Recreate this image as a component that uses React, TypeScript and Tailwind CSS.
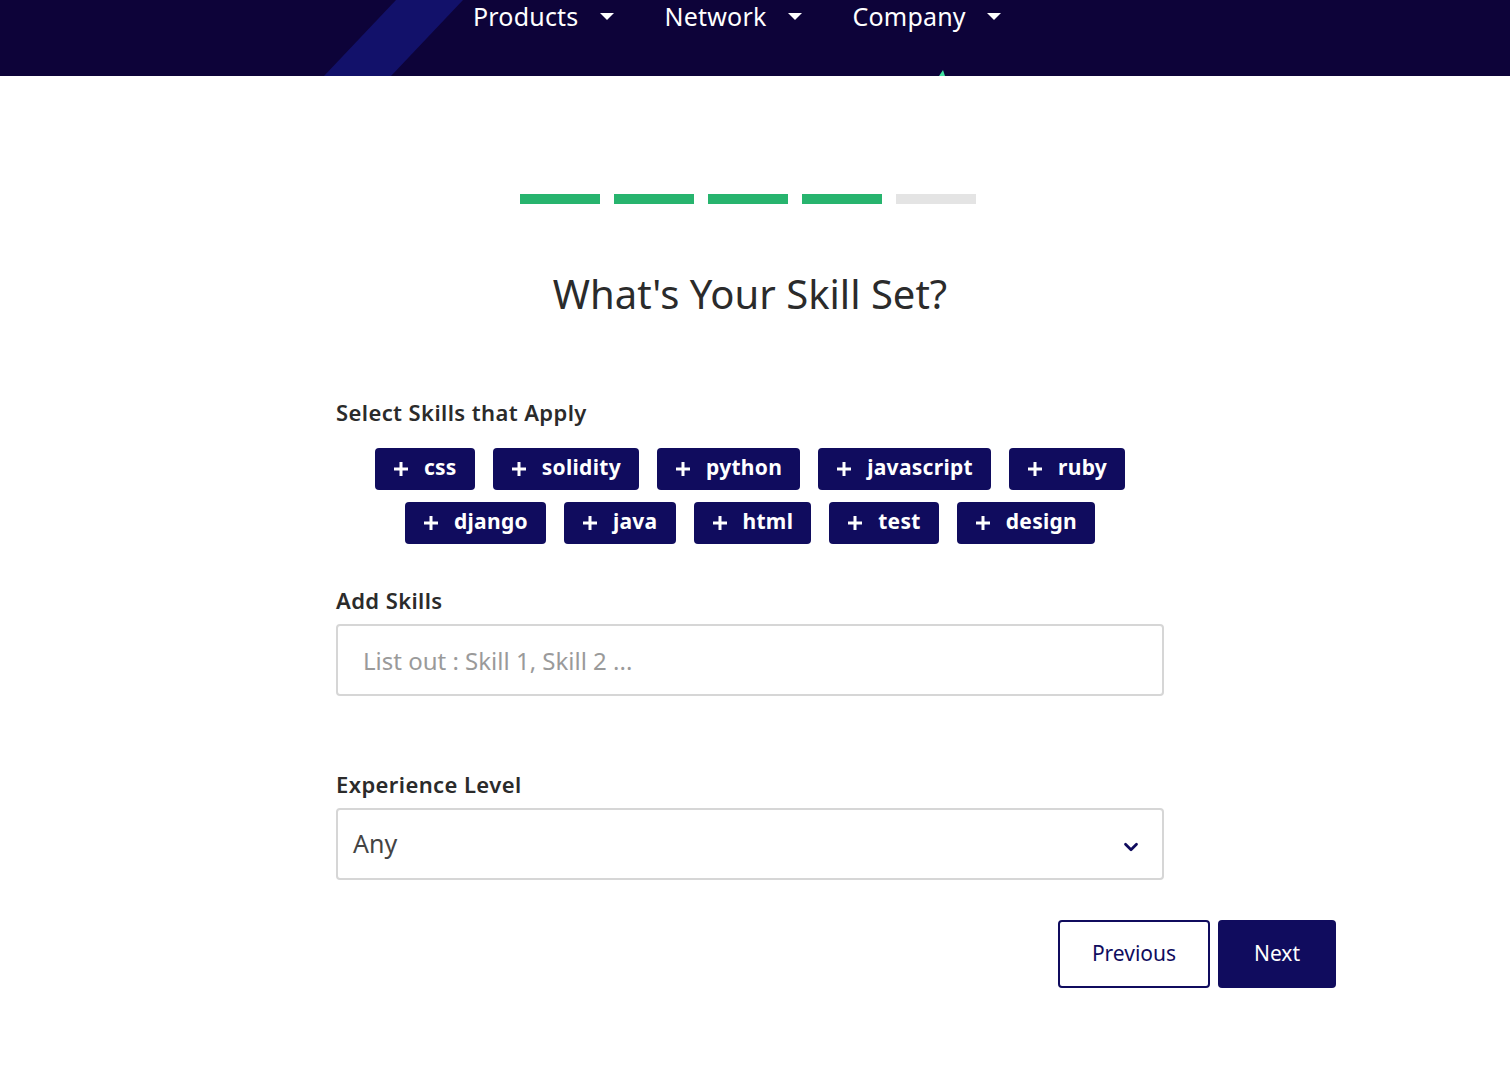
import { ChevronDown } from 'lucide-react';

const row1 = ['css', 'solidity', 'python', 'javascript', 'ruby'];
const row2 = ['django', 'java', 'html', 'test', 'design'];
const steps = [true, true, true, true, false];

function NavItem({ label }: { label: string }) {
  return (
    <div className="flex items-center gap-[21px]">
      <span className="text-[25px] leading-[34px] tracking-[0.2px] text-white">{label}</span>
      <svg width="14" height="8" viewBox="0 0 14 8" className="mt-[2px]">
        <path d="M0 0 L14 0 L7 7 Z" fill="#fff" />
      </svg>
    </div>
  );
}

function Chip({ label }: { label: string }) {
  return (
    <button className="h-[42px] flex items-center gap-[15px] px-[18px] rounded-[4px] bg-[#100c5e] text-white text-[21px] tracking-[0.3px] font-bold leading-none">
      <svg width="16" height="16" viewBox="0 0 16 16">
        <path d="M8 1 V15 M1 8 H15" stroke="#fff" strokeWidth="3" />
      </svg>
      <span className="-mt-[3px]">{label}</span>
    </button>
  );
}

export default function App() {
  return (
    <div className="min-h-[1086px] bg-white font-['Noto_Sans',sans-serif] text-[#2b2b2b]">
      {/* Header */}
      <header className="relative h-[76px] bg-[#0d0339] overflow-hidden">
        <svg className="absolute left-0 top-0" width="600" height="76" viewBox="0 0 600 76">
          <polygon points="396,0 463,0 391,76 324,76" fill="#12116a" />
        </svg>
        <svg className="absolute left-[937px] top-[70px]" width="10" height="6" viewBox="0 0 10 6">
          <polygon points="2,6 6,0 8,6" fill="#3fe0a0" />
        </svg>
        <nav className="relative flex gap-[51px] pl-[473px] -mt-[1px]">
          <NavItem label="Products" />
          <NavItem label="Network" />
          <NavItem label="Company" />
        </nav>
      </header>

      {/* Progress */}
      <div className="flex justify-center gap-[14px] mt-[118px] pr-[14px]">
        {steps.map((done, i) => (
          <div key={i} className={`h-[10px] w-[80px] ${done ? 'bg-[#27b46e]' : 'bg-[#e4e4e4]'}`} />
        ))}
      </div>

      <h1 className="mt-[66px] text-center text-[40px] leading-[48px] font-normal text-[#2b2b2b] pr-[10px]">
        What's Your Skill Set?
      </h1>

      <div className="ml-[336px] w-[828px] mt-[80px]">
        <div className="text-[22px] leading-[28px] tracking-[0.4px] font-semibold text-[#2b2b2b]">Select Skills that Apply</div>
        <div className="mt-[22px] flex flex-col gap-[12px]">
          <div className="flex justify-center gap-[18px]">
            {row1.map(s => <Chip key={s} label={s} />)}
          </div>
          <div className="flex justify-center gap-[18px]">
            {row2.map(s => <Chip key={s} label={s} />)}
          </div>
        </div>

        <div className="mt-[42px] text-[22px] leading-[28px] tracking-[0.4px] font-semibold text-[#2b2b2b]">Add Skills</div>
        <input
          className="mt-[10px] w-full h-[72px] border-2 border-[#d6d6d6] rounded-[4px] px-[25px] text-[24px] placeholder:text-[#9a9a9a] outline-none"
          placeholder="List out : Skill 1, Skill 2 ..."
        />

        <div className="mt-[74px] text-[22px] leading-[28px] tracking-[0.4px] font-semibold text-[#2b2b2b]">Experience Level</div>
        <div className="mt-[10px] w-full h-[72px] border-2 border-[#d6d6d6] rounded-[4px] pl-[15px] pr-[20px] flex items-center justify-between">
          <span className="text-[25px] text-[#444]">Any</span>
          <ChevronDown className="w-[22px] h-[22px] text-[#100c5e] mt-[6px]" strokeWidth={3} />
        </div>
      </div>

      <div className="ml-[336px] w-[1000px] mt-[40px] flex justify-end gap-[8px]">
        <button className="h-[68px] w-[152px] border-2 border-[#100c5e] rounded-[4px] text-[21px] text-[#100c5e]">
          Previous
        </button>
        <button className="h-[68px] w-[118px] bg-[#100c5e] rounded-[4px] text-[21px] text-white">
          Next
        </button>
      </div>
    </div>
  );
}
